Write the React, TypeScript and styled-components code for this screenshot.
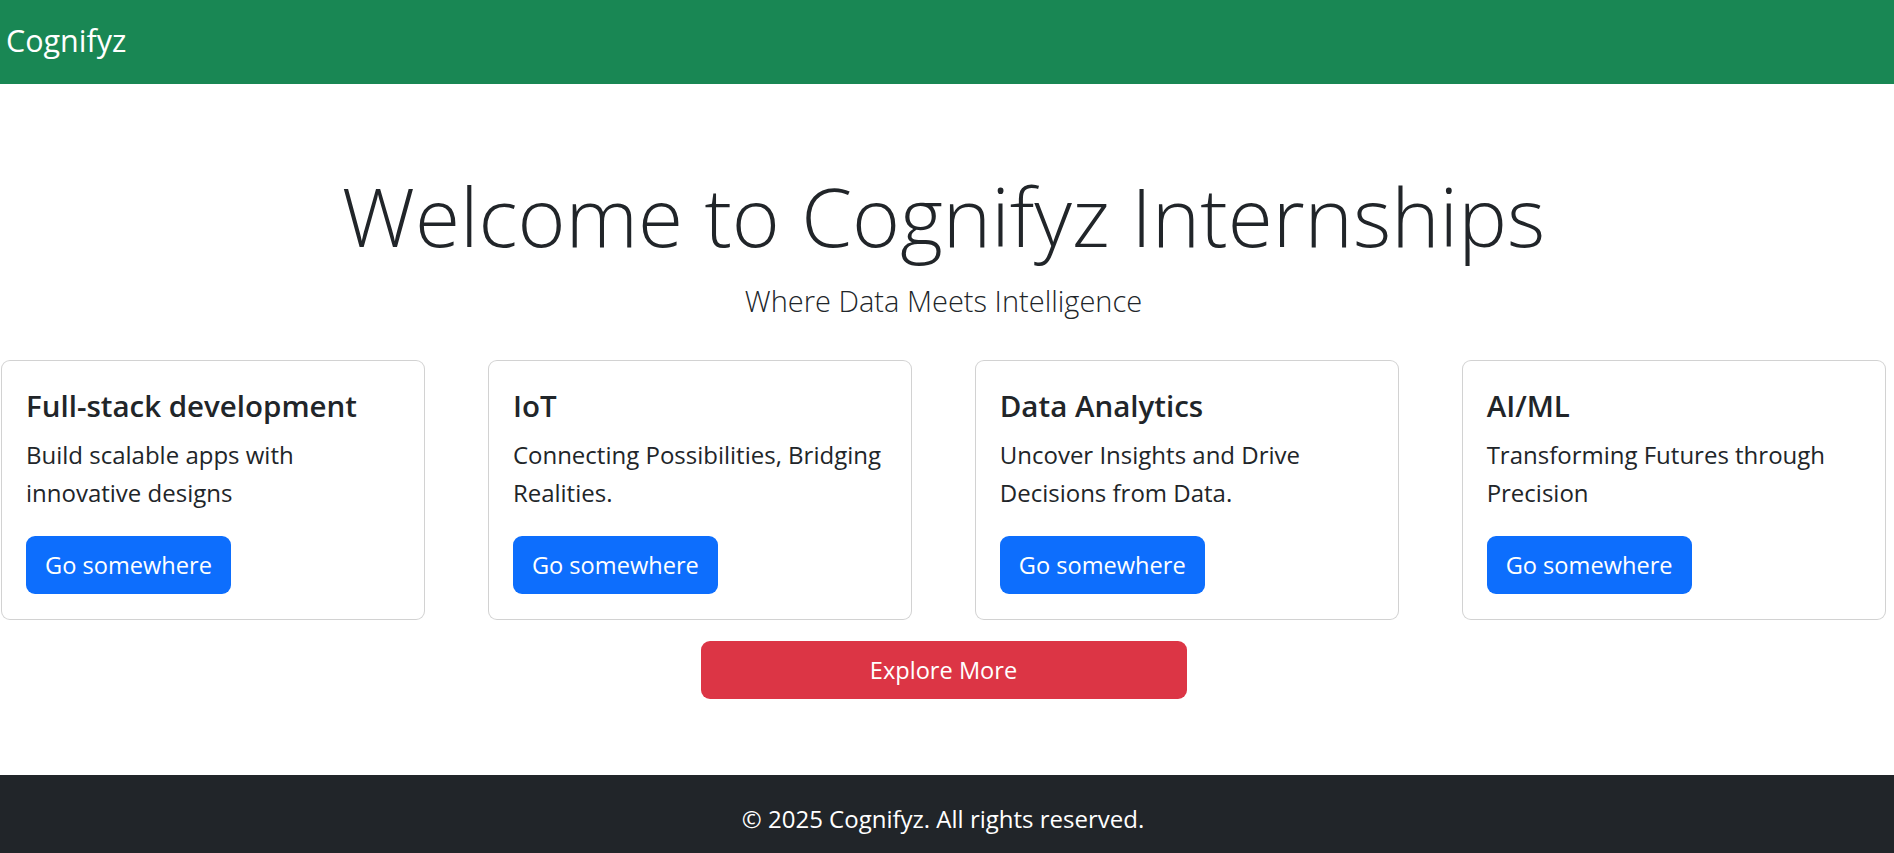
import React from "react";
import styled, { createGlobalStyle } from "styled-components";

const GlobalStyle = createGlobalStyle`
  html, body {
    margin: 0;
    padding: 0;
    overflow: hidden;
    background: #ffffff;
  }
  body {
    font-family: "Open Sans", "Noto Sans", "Liberation Sans", sans-serif;
    color: #212529;
  }
  * { box-sizing: border-box; }
`;

const Page = styled.div`
  width: 1894px;
  height: 853px;
  display: flex;
  flex-direction: column;
`;

const Navbar = styled.nav`
  height: 84px;
  flex: none;
  background: #198754;
  display: flex;
  align-items: center;
  padding: 0 6px 4px;
`;

const Brand = styled.a`
  color: #ffffff;
  font-size: 30.5px;
  line-height: 45px;
  text-decoration: none;
`;

const Main = styled.main`
  flex: 1;
  display: flex;
  flex-direction: column;
  align-items: center;
  padding: 82px 8px 0 1px;
`;

const Title = styled.h1`
  margin: 0;
  font-size: 82px;
  font-weight: 300;
  line-height: 1.2;
  text-align: center;
`;

const Lead = styled.p`
  margin: 15.5px 0 0;
  font-size: 29px;
  font-weight: 300;
  line-height: 42px;
  text-align: center;
`;

const CardRow = styled.div`
  align-self: stretch;
  margin-top: 38px;
  display: grid;
  grid-template-columns: repeat(4, 1fr);
  column-gap: 62.5px;
`;

const Card = styled.div`
  border: 1px solid rgba(0, 0, 0, 0.175);
  border-radius: 9px;
  padding: 24px 24px 25px;
  background: #fff;
  display: flex;
  flex-direction: column;
  align-items: flex-start;
`;

const CardTitle = styled.h5`
  margin: 0;
  font-size: 29.5px;
  font-weight: 600;
  line-height: 42px;
`;

const CardText = styled.p`
  margin: 9.5px 0 0;
  font-size: 24px;
  line-height: 37.7px;
`;

const Button = styled.a<{ $variant: "primary" | "danger" }>`
  display: inline-flex;
  align-items: center;
  justify-content: center;
  height: 58px;
  padding: 0 19px;
  border-radius: 9px;
  font-size: 23.6px;
  line-height: 36px;
  color: #fff;
  text-decoration: none;
  background: ${(p) => (p.$variant === "primary" ? "#0d6efd" : "#dc3545")};
`;

const CardButton = styled(Button)`
  margin-top: 24px;
`;

const ExploreButton = styled(Button)`
  width: 486px;
  margin-top: 21px;
`;

const Footer = styled.footer`
  flex: none;
  height: 78px;
  background: #212529;
  color: #fff;
  padding: 25.5px 8px 0 0;
  text-align: center;
  font-size: 24px;
  line-height: 36px;
`;

const cards = [
  { title: "Full-stack development", text: "Build scalable apps with innovative designs" },
  { title: "IoT", text: "Connecting Possibilities, Bridging Realities." },
  { title: "Data Analytics", text: "Uncover Insights and Drive Decisions from Data." },
  { title: "AI/ML", text: "Transforming Futures through Precision" },
];

export default function App() {
  return (
    <>
      <GlobalStyle />
      <Page>
        <Navbar>
          <Brand href="#">Cognifyz</Brand>
        </Navbar>
        <Main>
          <Title>Welcome to Cognifyz Internships</Title>
          <Lead>Where Data Meets Intelligence</Lead>
          <CardRow>
            {cards.map((c) => (
              <Card key={c.title}>
                <CardTitle>{c.title}</CardTitle>
                <CardText>{c.text}</CardText>
                <CardButton href="#" $variant="primary">Go somewhere</CardButton>
              </Card>
            ))}
          </CardRow>
          <ExploreButton href="#" $variant="danger">Explore More</ExploreButton>
        </Main>
        <Footer>© 2025 Cognifyz. All rights reserved.</Footer>
      </Page>
    </>
  );
}
